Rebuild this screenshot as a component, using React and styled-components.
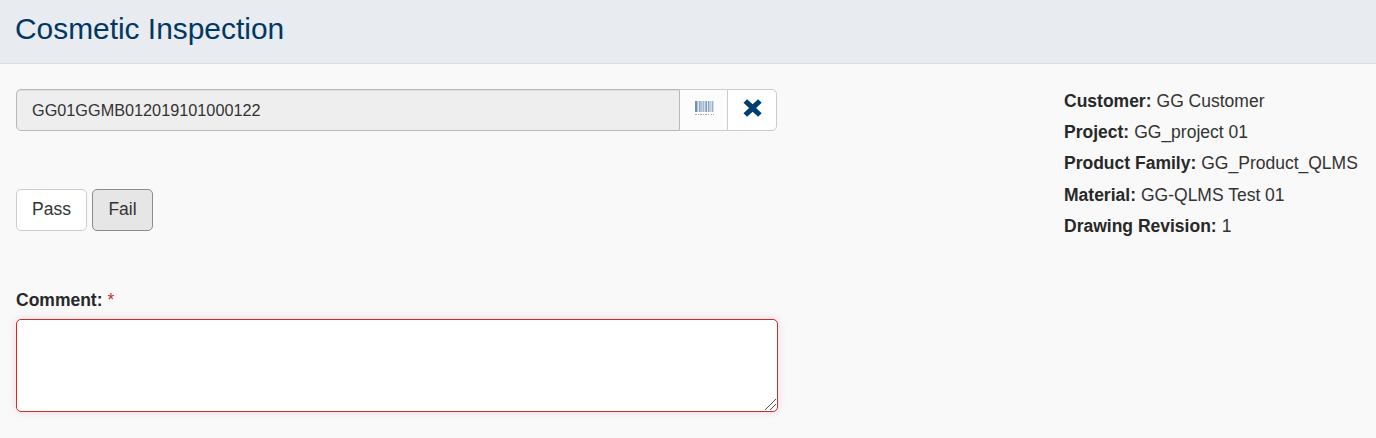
import React from "react";
import styled, { createGlobalStyle } from "styled-components";

const GlobalStyle = createGlobalStyle`
  *, *::before, *::after { box-sizing: border-box; }
  html { height: 100%; }
  body {
    margin: 0;
    min-height: 100%;
    background: #f9f9f9;
    color: #333;
    font-family: "Liberation Sans", Arial, sans-serif;
    font-size: 17.5px;
    line-height: 25px;
    overflow: hidden;
  }
  button, input, textarea { font-family: inherit; }
`;

const PageHeader = styled.header`
  height: 64px;
  padding: 11px 15px 0;
  background: #e8ebf0;
  border-bottom: 1px solid #dce0e4;
`;

const PageTitle = styled.h1`
  margin: 0;
  color: #003764;
  font-size: 29.9px;
  font-weight: 400;
  line-height: 35px;
`;

const Content = styled.main`
  display: flex;
  align-items: flex-start;
  padding: 25px 16px 0;
`;

const Form = styled.form`
  display: flex;
  flex-direction: column;
  width: 762px;
  flex: none;
`;

const InputGroup = styled.div`
  display: flex;
  width: 761px;
  height: 42px;
`;

const SerialInput = styled.input`
  flex: 1;
  min-width: 0;
  padding: 0 15px;
  border: 1px solid #b8b8b8;
  border-radius: 5px 0 0 5px;
  background: #eee;
  box-shadow: inset 0 1px 1px rgba(0, 0, 0, 0.075);
  color: #333;
  font-size: 16.25px;
  outline: none;
`;

const AddonButton = styled.button`
  display: flex;
  align-items: center;
  justify-content: center;
  width: ${(p) => p.$width}px;
  padding: 0 0 4px;
  border: 1px solid #ccc;
  border-left-width: ${(p) => (p.$last ? "1px" : "0")};
  border-right-width: ${(p) => (p.$last ? "1px" : "0")};
  border-radius: ${(p) => (p.$last ? "0 5px 5px 0" : "0")};
  background: ${(p) => (p.$last ? "#fff" : "#fcfcfc")};
  color: #003d71;
`;

const Choices = styled.div`
  display: flex;
  gap: 5px;
  margin-top: 58px;
`;

const ChoiceButton = styled.button`
  width: ${(p) => p.$width}px;
  height: 42px;
  padding: 0 0 2px;
  border: 1px solid ${(p) => (p.$active ? "#8c8c8c" : "#ccc")};
  border-radius: 5px;
  background: ${(p) => (p.$active ? "#e6e6e6" : "#fff")};
  color: #333;
  font-size: 17.5px;
  line-height: 25px;
`;

const CommentLabel = styled.label`
  margin-top: 57px;
  color: #282828;
  font-weight: 700;
`;

const Required = styled.span`
  color: #c9302c;
  font-weight: 400;
`;

const CommentField = styled.div`
  position: relative;
  height: 93px;
  margin-top: 6px;
`;

const CommentBox = styled.textarea`
  display: block;
  width: 762px;
  height: 93px;
  padding: 8px 15px;
  border: 1px solid #c9302c;
  border-radius: 5px;
  background: #fff;
  box-shadow: 0 0 8px rgba(220, 70, 130, 0.2);
  font-size: 17.5px;
  outline: none;
  resize: none;
`;

const Grip = styled.svg`
  position: absolute;
  right: 2px;
  bottom: 2px;
  pointer-events: none;
`;

const Details = styled.dl`
  display: flex;
  flex-direction: column;
  gap: 6.2px;
  margin: 0 0 0 286px;
  white-space: nowrap;
`;

const DetailRow = styled.div`
  display: flex;
  gap: 5px;
`;

const DetailName = styled.dt`
  color: #282828;
  font-weight: 700;
`;

const DetailValue = styled.dd`
  margin: 0;
`;

const details = [
  ["Customer:", "GG Customer"],
  ["Project:", "GG_project 01"],
  ["Product Family:", "GG_Product_QLMS"],
  ["Material:", "GG-QLMS Test 01"],
  ["Drawing Revision:", "1"],
];

// x, width and opacity of each stripe
const stripes = [
  [0, 2, 0.65], [2, 1, 0.35], [3, 1, 0.12], [4, 1, 0.5], [5, 1, 0.35],
  [6, 1, 0.35], [7, 1, 0.25], [8, 1, 0.42], [9, 1, 0.18], [10, 1, 0.4],
  [11, 1, 0.6], [12, 1, 0.08], [13, 1, 0.55], [14, 1, 0.3], [15, 1, 0.28],
  [16, 1, 0.2], [17, 1, 0.45], [18, 1, 0.2],
];

const BarcodeIcon = () => (
  <svg width="20" height="14" viewBox="-1 0 20 14" fill="#235c8b" shapeRendering="crispEdges" aria-hidden="true">
    {stripes.map(([x, w, o]) => (
      <rect key={x} x={x} y="0" width={w} height="11" opacity={o} />
    ))}
    {[0, 3, 5, 8, 10, 13, 16, 18].map((x) => (
      <rect key={x} x={x} y="13" width={x % 5 ? 1 : 2} height="1" opacity="0.5" />
    ))}
  </svg>
);

const RemoveIcon = () => (
  <svg width="19" height="18" viewBox="0 0 19 18" aria-hidden="true">
    <path
      d="M4.1.2 9.6 5.3 15.1.2 18.7 3.7 13.1 9 18.7 14.3 15.1 17.8 9.6 12.7 4.1 17.8.5 14.3 6.1 9 .5 3.7Z"
      fill="currentColor"
    />
  </svg>
);

const ResizeGrip = () => (
  <Grip width="11" height="11" viewBox="0 0 11 11" stroke="#555" strokeWidth="1" fill="none" aria-hidden="true">
    <path d="M0 11 11 0M5 11 11 5" />
  </Grip>
);

export default function App() {
  return (
    <>
      <GlobalStyle />
      <PageHeader>
        <PageTitle>Cosmetic Inspection</PageTitle>
      </PageHeader>
      <Content>
        <Form>
          <InputGroup>
            <SerialInput readOnly value="GG01GGMB012019101000122" aria-label="Serial number" />
            <AddonButton type="button" $width={47} aria-label="Scan barcode">
              <BarcodeIcon />
            </AddonButton>
            <AddonButton type="button" $width={50} $last aria-label="Clear">
              <RemoveIcon />
            </AddonButton>
          </InputGroup>
          <Choices>
            <ChoiceButton type="button" $width={71}>Pass</ChoiceButton>
            <ChoiceButton type="button" $width={61} $active>Fail</ChoiceButton>
          </Choices>
          <CommentLabel htmlFor="comment">
            Comment: <Required>*</Required>
          </CommentLabel>
          <CommentField>
            <CommentBox id="comment" />
            <ResizeGrip />
          </CommentField>
        </Form>
        <Details>
          {details.map(([name, value]) => (
            <DetailRow key={name}>
              <DetailName>{name}</DetailName>
              <DetailValue>{value}</DetailValue>
            </DetailRow>
          ))}
        </Details>
      </Content>
    </>
  );
}
